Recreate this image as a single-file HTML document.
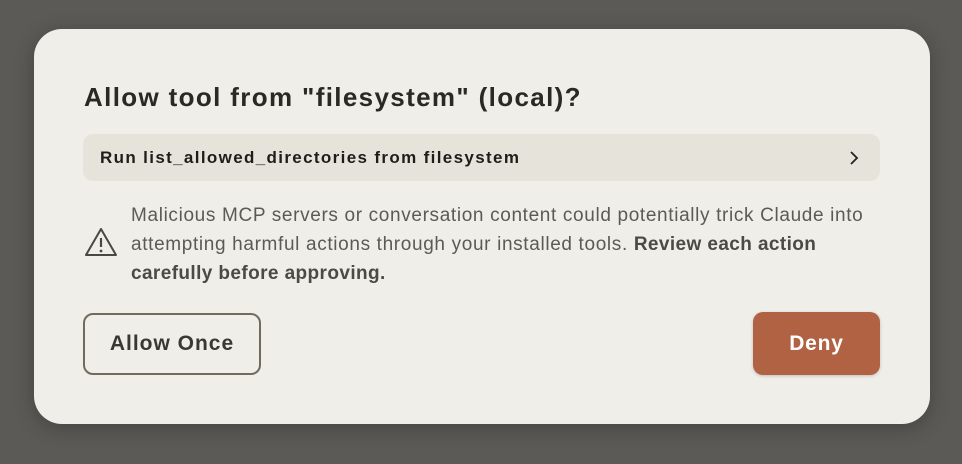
<!DOCTYPE html>
<html><head><style>
body{margin:0;width:962px;height:464px;background:#5b5a56;font-family:"Liberation Sans",sans-serif;overflow:hidden;position:relative}
.d{position:absolute;left:34px;top:29px;width:896px;height:395px;background:#f0eee8;border-radius:28px;box-shadow:0 4px 20px rgba(0,0,0,.25)}
.t{position:absolute;left:50px;top:53px;font-size:26px;font-weight:bold;color:#2b2924;letter-spacing:1.35px;white-space:nowrap}
.r{position:absolute;left:49px;top:105px;width:797px;height:47px;background:#e6e4da;border-radius:10px}
.r span{position:absolute;left:17px;top:14px;font-size:17px;font-weight:bold;color:#1e1d1a;letter-spacing:1.35px;white-space:nowrap}
.r svg{position:absolute;right:20px;top:16px}
.w{position:absolute;left:97px;top:172px;width:780px;font-size:19px;line-height:29px;color:#5c5a54;letter-spacing:0.65px;white-space:nowrap}
.w b{color:#4c4a44;letter-spacing:0.4px}
.ic{position:absolute;left:50px;top:197px}
.b1{position:absolute;left:49px;top:284px;width:174px;height:58px;border:2px solid #6f6c5e;border-radius:10px;font-size:21px;font-weight:bold;color:#3a3832;text-align:center;line-height:58px;letter-spacing:1px}
.b2{position:absolute;left:719px;top:283px;width:127px;height:63px;background:#b06242;border-radius:10px;font-size:21px;font-weight:bold;color:#fff;text-align:center;line-height:63px;letter-spacing:0.8px;box-shadow:0 1px 3px rgba(0,0,0,.2)}
</style></head><body>
<div class="d">
<div class="t">Allow tool from "filesystem" (local)?</div>
<div class="r"><span>Run list_allowed_directories from filesystem</span>
<svg width="12" height="16" viewBox="0 0 12 16"><path d="M3 2l6 6-6 6" fill="none" stroke="#222" stroke-width="1.8"/></svg></div>
<svg class="ic" width="34" height="32" viewBox="0 0 34 32"><path d="M17 3L2 29h30z" fill="none" stroke="#4a4842" stroke-width="2" stroke-linejoin="round"/><path d="M17 12v9" stroke="#4a4842" stroke-width="2.2"/><circle cx="17" cy="25" r="1.4" fill="#4a4842"/></svg>
<div class="w">Malicious MCP servers or conversation content could potentially trick Claude into<br>attempting harmful actions through your installed tools. <b>Review each action</b><br><b>carefully before approving.</b></div>
<div class="b1">Allow Once</div>
<div class="b2">Deny</div>
</div>
</body></html>
